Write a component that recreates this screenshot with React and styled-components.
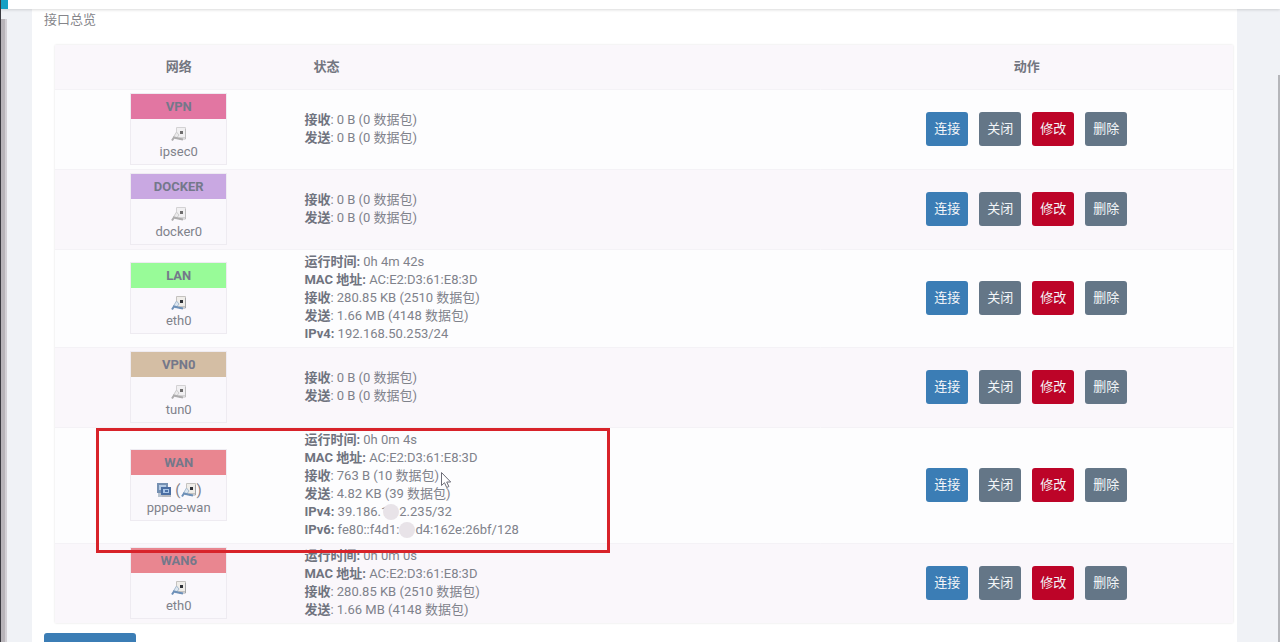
import styled, { createGlobalStyle } from 'styled-components'

const MAC = 'AC:E2:D3:61:E8:3D'

const idleStatus = [
  { label: '接收', value: '0 B (0 数据包)' },
  { label: '发送', value: '0 B (0 数据包)' },
]

const interfaces = [
  { name: 'VPN', device: 'ipsec0', color: '#e276a2', up: false, status: idleStatus },
  { name: 'DOCKER', device: 'docker0', color: '#c9a8e2', up: false, status: idleStatus },
  {
    name: 'LAN',
    device: 'eth0',
    color: '#98fb98',
    up: true,
    status: [
      { label: '运行时间:', value: '0h 4m 42s' },
      { label: 'MAC 地址:', value: MAC },
      { label: '接收', value: '280.85 KB (2510 数据包)' },
      { label: '发送', value: '1.66 MB (4148 数据包)' },
      { label: 'IPv4:', value: '192.168.50.253/24' },
    ],
  },
  { name: 'VPN0', device: 'tun0', color: '#d4bea4', up: false, status: idleStatus },
  {
    name: 'WAN',
    device: 'pppoe-wan',
    color: '#e98690',
    up: true,
    tunnel: true,
    status: [
      { label: '运行时间:', value: '0h 0m 4s' },
      { label: 'MAC 地址:', value: MAC },
      { label: '接收', value: '763 B (10 数据包)' },
      { label: '发送', value: '4.82 KB (39 数据包)' },
      { label: 'IPv4:', value: '39.186.1', rest: '2.235/32', overlap: true },
      { label: 'IPv6:', value: 'fe80::f4d1:', rest: 'd4:162e:26bf/128' },
    ],
  },
  {
    name: 'WAN6',
    device: 'eth0',
    color: '#e98690',
    up: true,
    status: [
      { label: '运行时间:', value: '0h 0m 0s' },
      { label: 'MAC 地址:', value: MAC },
      { label: '接收', value: '280.85 KB (2510 数据包)' },
      { label: '发送', value: '1.66 MB (4148 数据包)' },
    ],
  },
]

const EthernetIcon = ({ up }) => (
  <Icon viewBox='0 0 16 16' $up={up} aria-hidden='true'>
    <path d='M5.500 1.500h9v10h-9z' fill='#efede9' stroke='#c4c2bf' />
    <path d='M14.500 3v10H8' fill='none' stroke='#a3a5a8' />
    <path d='M9 5h3v3H9z' fill='#2f3238' />
    <path d='M5.500 6 8 9l-3 4-2.500-2z' fill='#dce6f0' stroke='#a9bccf' />
    <path d='M1 14.500 3 11.500l4 1 5 1' fill='none' stroke='#6d90b8' strokeWidth='2' />
  </Icon>
)

const TunnelIcon = () => (
  <Icon viewBox='0 0 16 16' $up aria-hidden='true'>
    <path d='M1 1h11v10H1z' fill='#7590b2' />
    <path d='M3 3h7v5H3z' fill='#b3cae4' />
    <path d='M2 11h4v4H2z' fill='#b9c4d0' />
    <path d='M5 5h10v8H5z' fill='#4a6ea2' />
    <path d='M7 7h6v4H7z' fill='#a9c6e8' />
    <path d='M9 8h3v2H9z' fill='#4a71a8' />
    <path d='M6 13h9v2H6z' fill='#b6b9be' />
  </Icon>
)

const InterfaceBox = ({ name, device, color, up, tunnel }) => (
  <Box>
    <BoxHead $color={color}>{name}</BoxHead>
    <BoxBody>
      <IconLine>
        {tunnel ? (
          <>
            <TunnelIcon />
            &nbsp;(
            <EthernetIcon up={up} />)
          </>
        ) : (
          <EthernetIcon up={up} />
        )}
      </IconLine>
      <span>{device}</span>
    </BoxBody>
  </Box>
)

const App = () => {
  return (
    <>
      <GlobalStyle />
      <Shell>
        <TopBar>
          <BrandEdge />
        </TopBar>
        <Content>
          <LeftRail />
          <Card>
            <Title>接口总览</Title>
            <TableWrap>
              <Table>
                <thead>
                  <tr>
                    <HeadCell $width='21%'>网络</HeadCell>
                    <HeadCell $width='44%' $left>
                      状态
                    </HeadCell>
                    <HeadCell $width='35%'>动作</HeadCell>
                  </tr>
                </thead>
                <tbody>
                  {interfaces.map((item) => (
                    <Row key={item.name}>
                      <Cell>
                        <InterfaceBox {...item} />
                      </Cell>
                      <Cell>
                        {item.status.map(({ label, value, rest, overlap }) => (
                          <StatusLine key={label}>
                            <strong>{label}</strong>
                            {label.endsWith(':') ? ' ' : ': '}
                            {value}
                            {rest && <Mask $overlap={overlap} />}
                            {rest}
                          </StatusLine>
                        ))}
                      </Cell>
                      <Cell>
                        <Actions>
                          <Button $color='#3b7db5'>连接</Button>
                          <Button $color='#647687'>关闭</Button>
                          <Button $color='#bd0428'>修改</Button>
                          <Button $color='#647687'>删除</Button>
                        </Actions>
                      </Cell>
                    </Row>
                  ))}
                </tbody>
              </Table>
              <Highlight>
                <Pointer viewBox='0 0 12 18' aria-hidden='true'>
                  <path
                    d='M1.500 1.500v13l3-2.800 2.200 4.800 2.200-1-2.200-4.500h4z'
                    fill='#fff'
                    stroke='#6d6d78'
                  />
                </Pointer>
              </Highlight>
            </TableWrap>
            <AddButton $color='#3b7db5' aria-label='添加新接口' />
          </Card>
          <RightRail />
        </Content>
      </Shell>
    </>
  )
}

const GlobalStyle = createGlobalStyle`
  * {
    box-sizing: border-box;
  }
  body {
    margin: 0;
    background: #f0f2f6;
    color: #7f828b;
    font-family: Roboto, 'Noto Sans CJK SC', sans-serif;
    font-size: 13px;
    line-height: 18px;
  }
`
const Shell = styled.div`
  display: flex;
  flex-direction: column;
  height: 100vh;
  overflow: hidden;
  border-left: 1px solid #3a3a40;
`
const TopBar = styled.header`
  flex: none;
  height: 9px;
  background: #fff;
  box-shadow: 0 1px 3px rgba(0, 0, 0, 0.15);
  z-index: 1;
`
const BrandEdge = styled.div`
  width: 7px;
  height: 9px;
  background: #16a0c4;
`
const Content = styled.div`
  display: flex;
  flex: 1;
  min-height: 0;
`
const LeftRail = styled.div`
  flex: none;
  width: 6px;
  margin: 10px 25px 0 0;
  background: #b8b4b9;
  border-right: 2px solid #d3d0d5;
`
const RightRail = styled.div`
  flex: none;
  width: 2px;
  margin: 66px 0 0 41px;
  background: #b5b6ba;
`
const Card = styled.main`
  flex: 1;
  padding: 2px 3px 0 12px;
  background: #fff;
`
const Title = styled.h3`
  margin: 0 0 16px;
  color: #85858a;
  font-size: 13px;
  font-weight: 400;
`
const TableWrap = styled.div`
  position: relative;
  margin: 0 1px 10px 11px;
`
const Table = styled.table`
  width: 100%;
  table-layout: fixed;
  border-spacing: 0;
  background: #fdfdfe;
  box-shadow: 0 0 2px rgba(0, 0, 0, 0.12);
`
const HeadCell = styled.th`
  width: ${(props) => props.$width};
  height: 44px;
  padding: 0 0 0 ${(props) => (props.$left ? '11px' : '0')};
  background: #faf7fb;
  color: #737680;
  text-align: ${(props) => (props.$left ? 'left' : 'center')};
`
const Row = styled.tr`
  &:nth-child(even) {
    background: #faf7fb;
  }
`
const Cell = styled.td`
  padding: 4px 2px;
  background: linear-gradient(#f4f2f6, #f4f2f6) top / 100% 1px no-repeat;
`
const Box = styled.div`
  width: 97px;
  height: 72px;
  margin: 0 auto;
  border: 1px solid #eeebf1;
  background: #faf8fc;
  text-align: center;
`
const BoxHead = styled.div`
  height: 25px;
  background: ${(props) => props.$color};
  color: #74788a;
  font-weight: 700;
  line-height: 25px;
`
const BoxBody = styled.div`
  padding-top: 6px;
`
const IconLine = styled.div`
  display: flex;
  justify-content: center;
  align-items: center;
  height: 18px;
  font-size: 15px;
`
const Icon = styled.svg`
  width: 16px;
  height: 16px;
  filter: ${(props) => (props.$up ? 'none' : 'grayscale(1) opacity(0.7)')};
`
const StatusLine = styled.div`
  white-space: nowrap;
  strong {
    color: #6f737e;
  }
`
const Mask = styled.span`
  display: inline-block;
  position: relative;
  width: 16px;
  height: 16px;
  margin: -2px 0 0 ${(props) => (props.$overlap ? '-5px' : '0')};
  border-radius: 50%;
  background: #e8e3e8;
  vertical-align: middle;
`
const Actions = styled.div`
  display: flex;
  justify-content: center;
  gap: 11px;
`
const Button = styled.button`
  width: 42px;
  height: 34px;
  padding: 0;
  border: none;
  border-radius: 3px;
  background: ${(props) => props.$color};
  color: #f4f6f9;
  font: inherit;
  cursor: pointer;
`
const AddButton = styled(Button)`
  width: 92px;
`
const Highlight = styled.div`
  position: absolute;
  top: 383px;
  left: 41px;
  width: 514px;
  height: 125px;
  border: 3px solid #d8232a;
  pointer-events: none;
`
const Pointer = styled.svg`
  position: absolute;
  top: 40px;
  left: 341px;
  width: 12px;
  height: 18px;
`

export default App
